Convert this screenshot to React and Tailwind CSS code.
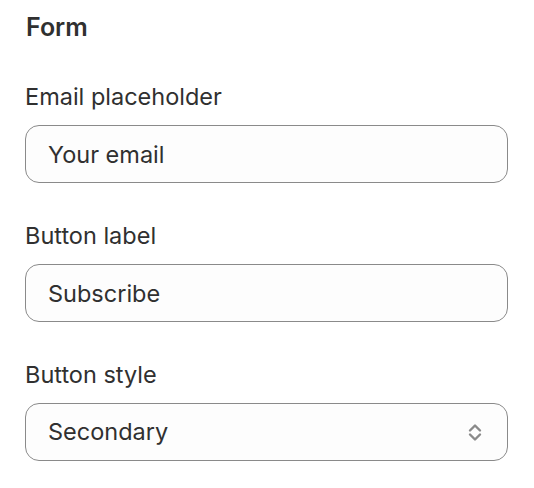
import { useState } from "react";

const Field = ({ label, children }) => (
  <div className="flex flex-col">
    <label className="text-[23.5px] leading-[30px] text-[#303030] mb-[13px]">{label}</label>
    {children}
  </div>
);

const TextInput = ({ value, onChange }) => (
  <input
    value={value}
    onChange={(e) => onChange(e.target.value)}
    className="h-[58px] w-full rounded-[14px] border border-[#8a8a8a] bg-[#fdfdfd] px-[22px] text-[23.5px] text-[#303030] outline-none"
  />
);

const SelectIcon = () => (
  <svg width="20" height="28" viewBox="0 0 20 28" fill="none" className="text-[#8a8a8a]">
    <path d="M5 12.5L10 7.5L15 12.5" stroke="currentColor" strokeWidth="2.4" strokeLinecap="round" strokeLinejoin="round" />
    <path d="M5 16.5L10 21.5L15 16.5" stroke="currentColor" strokeWidth="2.4" strokeLinecap="round" strokeLinejoin="round" />
  </svg>
);

export default function App() {
  const [placeholder, setPlaceholder] = useState("Your email");
  const [buttonLabel, setButtonLabel] = useState("Subscribe");
  const [buttonStyle, setButtonStyle] = useState("Secondary");

  return (
    <div className="min-h-screen bg-white pl-[25px] pr-[26px] pt-[11px] font-['Inter',sans-serif]">
      <h2 className="text-[25px] leading-[32px] font-semibold text-[#303030] mb-[39px] pl-px">Form</h2>

      <div className="flex flex-col gap-[38px]">
        <Field label="Email placeholder">
          <TextInput value={placeholder} onChange={setPlaceholder} />
        </Field>

        <Field label="Button label">
          <TextInput value={buttonLabel} onChange={setButtonLabel} />
        </Field>

        <Field label="Button style">
          <div className="relative">
            <select
              value={buttonStyle}
              onChange={(e) => setButtonStyle(e.target.value)}
              className="h-[58px] w-full appearance-none rounded-[14px] border border-[#8a8a8a] bg-[#fdfdfd] px-[22px] text-[23.5px] text-[#303030] outline-none"
            >
              <option>Primary</option>
              <option>Secondary</option>
            </select>
            <span className="pointer-events-none absolute right-[23px] top-1/2 -translate-y-1/2 flex">
              <SelectIcon />
            </span>
          </div>
        </Field>
      </div>
    </div>
  );
}
